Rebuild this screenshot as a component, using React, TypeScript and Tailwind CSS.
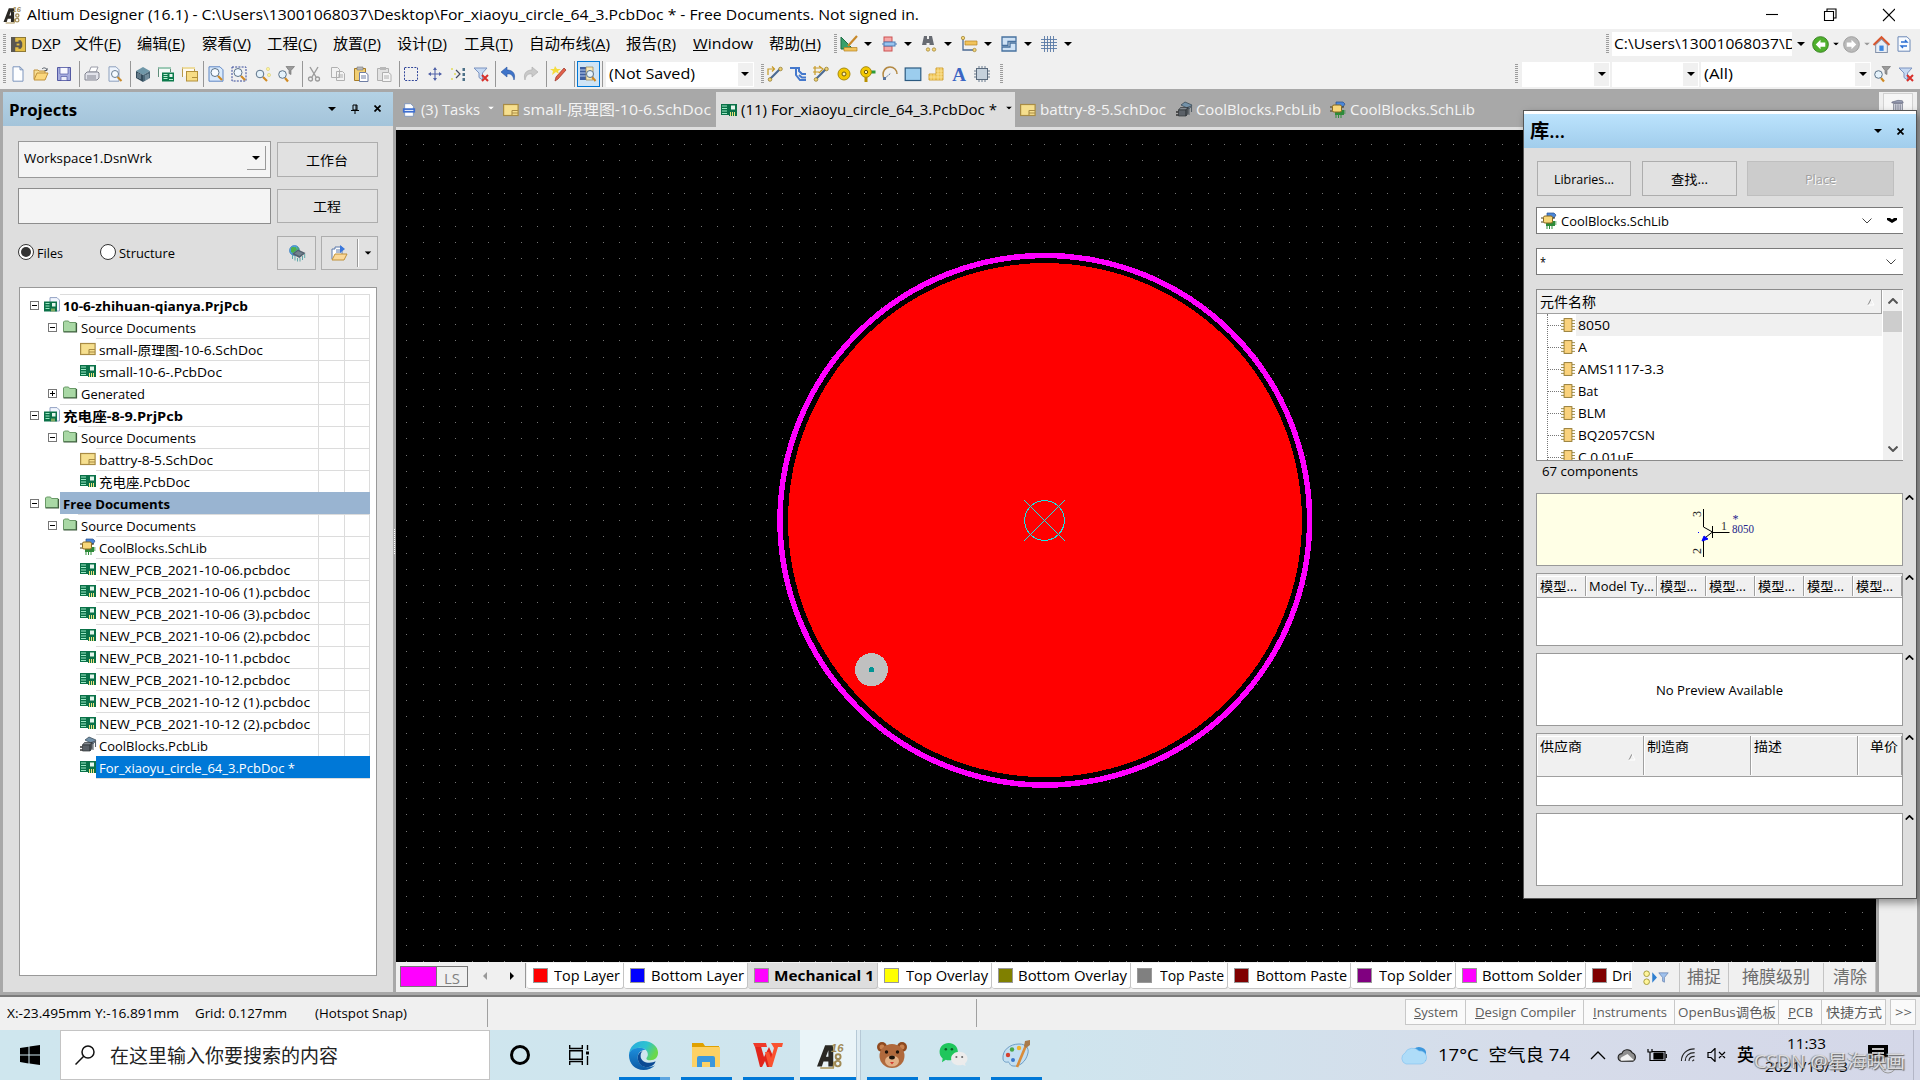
import { useLayoutEffect, useRef } from "react";
import type { ReactNode } from "react";

/* Text squeezed or stretched horizontally to the width given by its class. */
function Fit({ c, children }: { c: string; children: ReactNode }) {
  const outer = useRef<HTMLSpanElement>(null);
  const inner = useRef<HTMLSpanElement>(null);
  useLayoutEffect(() => {
    const o = outer.current;
    const i = inner.current;
    if (!o || !i) return;
    i.style.transform = "none";
    i.style.transform = `scaleX(${o.getBoundingClientRect().width / i.getBoundingClientRect().width})`;
  }, []);
  return (
    <span ref={outer} className={`block shrink-0 whitespace-pre leading-[20px] ${c}`}>
      <span ref={inner} className="inline-block origin-left">
        {children}
      </span>
    </span>
  );
}

const glyphs: Record<string, ReactNode> = {
  dxp: (
    <>
      <rect x=".5" y=".5" width="15" height="15" fill="#e3bd45" stroke="#8a7430" />
      <rect x="0" y="0" width="4.500" height="16" fill="#5a5752" />
      <path d="M4 5h4V3.500h2.500L12 6v4l-1.500 2.500H8V11H4z" fill="#5b5750" />
      <path d="M6 7h3v2H6z" fill="#e3bd45" />
    </>
  ),
  new: <path d="M3 .8h7l3 3v11.400H3z M10 .8v3h3" fill="#fdfeff" stroke="#7d95bd" />,
  open: (
    <>
      <path d="M1 13V4h4l1 1h6v3" fill="#f7dd93" stroke="#c0913a" />
      <path d="M1 14l3-7h11l-3 7z" fill="#fbd77c" stroke="#c0913a" />
      <path d="M9 3c2-2 4-1 5 1m0-2v2.500h-2.500" fill="none" stroke="#555d68" />
    </>
  ),
  save: (
    <>
      <path d="M1.500 1.500h13v13h-13z" fill="#a4abdd" stroke="#5359a3" />
      <path d="M4 1.500h8V8H4z" fill="#f8f9ff" stroke="#5359a3" strokeWidth=".7" />
      <path d="M5 10.500h6v4H5z" fill="#eceefa" stroke="#5359a3" strokeWidth=".7" />
    </>
  ),
  print: (
    <>
      <path d="M5 6l2-5h7l-2 5z" fill="#fff" stroke="#9a9ca8" />
      <path d="M1 8l2-2h11l1 1v5l-2 2H1z" fill="#e1e2ea" stroke="#81838f" />
      <path d="M3 10h9M3 12h9" stroke="#81838f" />
    </>
  ),
  preview: (
    <>
      <path d="M2 .8h7l3 3v11.400H2z" fill="#eef4fd" stroke="#8da0bd" />
      <path d="M10.500 11l4 4" stroke="#c98b2c" strokeWidth="2" />
      <circle cx="8" cy="8" r="3.500" fill="#f4faff" stroke="#687d92" />
    </>
  ),
  cube: (
    <>
      <path d="M8 1l7 4-7 4-7-4z" fill="#6f97a8" />
      <path d="M1 5l7 4v7l-7-4z" fill="#334c5c" />
      <path d="M15 5L8 9v7l7-4z" fill="#4b6878" />
      <path d="M3 7v5m2-4v5m6-4v5m2-6v5" stroke="#b9cfda" strokeWidth=".7" />
    </>
  ),
  pcbwin: (
    <>
      <path d="M.5 11V1.500h12V6" fill="#f4faf7" stroke="#5f8d7a" />
      <path d="M.5 1h12.500v2H.5z" fill="#9cc9b5" />
      <rect x="4" y="6.500" width="12" height="9" fill="#0c7a4c" />
      <path d="M5.500 8.500h4m-4 2h4m-4 2h4M11 13.500h4" stroke="#b9f0d2" />
      <rect x="11.500" y="8" width="3" height="3" fill="#e8f6ef" />
    </>
  ),
  schwin: (
    <>
      <path d="M.5 11V1.500h12V6" fill="#fffaf0" stroke="#b89a4b" />
      <path d="M.5 1h12.500v2H.5z" fill="#eddc9f" />
      <rect x="4.500" y="5.500" width="11" height="9.500" fill="#f7dc85" stroke="#b2903b" />
      <path d="M10 11.500h5" stroke="#b2903b" />
    </>
  ),
  zoomdoc: (
    <>
      <path d="M1 .8h11l3 3v11.400H1z" fill="#d9eafc" stroke="#5f86c4" />
      <path d="M10 10l4 4" stroke="#d08a22" strokeWidth="2.200" />
      <circle cx="7" cy="6.500" r="4" fill="#f6fbff" stroke="#5b7288" />
    </>
  ),
  zoomsel: (
    <>
      <rect x="1" y="1" width="14" height="14" fill="none" stroke="#32479a" strokeDasharray="2 1.200" />
      <path d="M10 10l4 4" stroke="#d08a22" strokeWidth="2.200" />
      <circle cx="7" cy="6.500" r="4" fill="#f0f8ff" stroke="#5b7288" />
    </>
  ),
  zoompts: (
    <>
      <path d="M8 11l4 4" stroke="#d08a22" strokeWidth="2.200" />
      <circle cx="5" cy="8" r="3.800" fill="#e5f2fb" stroke="#5b7288" />
      <circle cx="13" cy="3" r="1.600" fill="#fff59b" stroke="#d6cc7a" strokeWidth=".6" />
      <circle cx="14" cy="9" r="1.600" fill="#fff59b" stroke="#d6cc7a" strokeWidth=".6" />
    </>
  ),
  zoomfil: (
    <>
      <path d="M8 .5h8.500L13 4.500v4l-2-1v-3z" fill="#9a9a9a" stroke="#6a6a6a" strokeWidth=".6" />
      <path d="M7 12l3 3.500" stroke="#d08a22" strokeWidth="2.200" />
      <circle cx="4.500" cy="8.500" r="3.800" fill="#e5f2fb" stroke="#5b7288" />
    </>
  ),
  cut: (
    <>
      <path d="M4 1l6 10M12 1L6 11" stroke="#9b9b9b" strokeWidth="1.400" />
      <circle cx="4.500" cy="13" r="2" fill="none" stroke="#9b9b9b" strokeWidth="1.300" />
      <circle cx="11.500" cy="13" r="2" fill="none" stroke="#9b9b9b" strokeWidth="1.300" />
    </>
  ),
  copy: <path d="M1.500 1.500h6l2 2v8h-8zM6.500 5.500h6l2 2v7h-8zM8 9h5m-5 2h5" fill="#f2f2f2" stroke="#b0b0b0" />,
  paste: (
    <>
      <path d="M1.500 2.500h11v12h-11z" fill="#f1cf74" stroke="#a77c26" />
      <path d="M4 1h6v3H4z" fill="#b9b9b9" stroke="#777" strokeWidth=".6" />
      <path d="M6.500 6.500h6l2.500 2v7H6.500zM8 10h5m-5 2h5" fill="#fff" stroke="#6f7ea4" />
    </>
  ),
  pasteg: (
    <>
      <path d="M1.500 2.500h11v12h-11z" fill="#e2e2e2" stroke="#b0b0b0" />
      <path d="M4 1h6v3H4z" fill="#b9b9b9" />
      <path d="M6.500 6.500h6l2.500 2v7H6.500zM8 10h5m-5 2h5" fill="#f5f5f5" stroke="#b0b0b0" />
    </>
  ),
  select: <rect x="1.500" y="1.500" width="13" height="13" fill="none" stroke="#32479a" strokeDasharray="2 1.300" />,
  move: (
    <>
      <path d="M8 2v12M2 8h12" stroke="#5263a8" strokeWidth="1.100" />
      <path d="M8 1l2 3H6zM8 15l2-3H6zM1 8l3-2v4zM15 8l-3-2v4z" fill="#5263a8" />
    </>
  ),
  desel: (
    <>
      <path d="M6 4l4 4-4 4" fill="none" stroke="#434b5f" strokeWidth="1.200" />
      <path d="M1 2h2v2H1zM4 7h2v2H4zM1 12h2v2H1z" fill="#e5e07e" />
      <path d="M12.500 2h2.500v3h-2.500zM12.500 7h2.500v3h-2.500zM12.500 12h2.500v3h-2.500z" fill="#4c7087" />
    </>
  ),
  clrfil: (
    <>
      <path d="M1 2h13L9.500 7v7L6 11.500V7z" fill="#c6d9f3" stroke="#7c94c0" />
      <path d="M9 9l6 6m0-6l-6 6" stroke="#d8302c" strokeWidth="2" />
    </>
  ),
  undo: <path d="M7 1L1 6l6 5V8c4-.5 6 1 7 6 2-6-1-10-7-10z" fill="#3f74c9" stroke="#2a56a0" strokeWidth=".6" />,
  redo: <path d="M9 1l6 5-6 5V8c-4-.5-6 1-7 6C0 8 3 4 9 4z" fill="#c9c9c9" stroke="#aaa" strokeWidth=".6" />,
  cross: (
    <>
      <path d="M14 2l2 2-8 9-3 2 1-4z" fill="#e2604a" stroke="#9b2f22" strokeWidth=".7" />
      <path d="M0 3l4 0 1-3 2 3 4 0-3 2 1 3-3-2-4 3 1-4z" fill="#f5dc3e" />
    </>
  ),
  browse: (
    <>
      <rect x="0" y="1" width="6" height="13" fill="#3f5fa0" />
      <path d="M0 4h6M0 7h6M0 10h6" stroke="#bcd0f0" />
      <path d="M6 1h7v13H6z" fill="#f7e7b7" stroke="#99854a" strokeWidth=".7" />
      <path d="M12 11l3.500 4" stroke="#d08a22" strokeWidth="2" />
      <circle cx="10" cy="8" r="3.500" fill="#e5f2fb" stroke="#5b7288" />
    </>
  ),
  route: (
    <>
      <path d="M1 9V3h6m-2-2.500L7.500 3 5 5.500" fill="none" stroke="#c79a24" strokeWidth="1.200" />
      <path d="M3 13L13 3" stroke="#4b6a93" strokeWidth="2.200" />
      <circle cx="3" cy="13.500" r="1.800" fill="#ecd072" stroke="#8e7423" strokeWidth=".7" />
      <circle cx="13.500" cy="3" r="1.800" fill="#ecd072" stroke="#8e7423" strokeWidth=".7" />
    </>
  ),
  diff: <path d="M0 2h9v3l3 3h4M6 2v7l4 5h6M9 9l3 2.500h4" fill="none" stroke="#4478cc" strokeWidth="2" />,
  multi: (
    <>
      <path d="M0 2h8M0 6h6M2 0v9M6 0l4 3-4 4" fill="none" stroke="#c79a24" strokeWidth="1.200" />
      <path d="M3 13L13 3" stroke="#4b6a93" strokeWidth="2.200" />
      <circle cx="3" cy="13.500" r="1.800" fill="#ecd072" stroke="#8e7423" strokeWidth=".7" />
      <circle cx="13.500" cy="3" r="1.800" fill="#ecd072" stroke="#8e7423" strokeWidth=".7" />
    </>
  ),
  pad: (
    <>
      <circle cx="8" cy="8" r="6" fill="#f3c800" stroke="#a88b0d" />
      <circle cx="8" cy="8" r="2" fill="#fff3b0" stroke="#6f5b0c" />
    </>
  ),
  via: (
    <>
      <path d="M7 8v8" stroke="#b99000" strokeWidth="3" />
      <path d="M10 4.500h6.500v3H10z" fill="#2e9b36" />
      <circle cx="7" cy="6" r="5.300" fill="#f3c800" stroke="#a88b0d" />
      <circle cx="7" cy="6" r="1.700" fill="#fff3b0" stroke="#6f5b0c" />
    </>
  ),
  arc: (
    <>
      <path d="M2 13C-1 5 4 1 8 1c4 0 7 3 7 7" fill="none" stroke="#b38842" strokeWidth="1.500" />
      <path d="M2 13l7-6" stroke="#58739b" strokeDasharray="2 1" />
      <path d="M1 11h3v3H1z" fill="#58739b" />
    </>
  ),
  fill: <rect x=".2" y="2" width="15.600" height="12.500" fill="#9ccdee" stroke="#2c5a80" strokeWidth="1.200" />,
  poly: (
    <>
      <path d="M8 2h7v12H1V8h7z" fill="#f0c552" stroke="#d3a53c" />
      <path d="M10 2v12M13 2v12M3 8v6M6 8v6M8 5h7M1 11h14M8 8h7" stroke="#fbe7a8" strokeWidth=".7" />
    </>
  ),
  text: (
    <text x="8" y="14.500" textAnchor="middle" fontSize="19" fontWeight="bold" fill="#3b66c4" fontFamily="Liberation Serif, serif">
      A
    </text>
  ),
  comp: (
    <>
      <path d="M5 0v16M8 0v16M11 0v16M0 5h16M0 8h16M0 11h16" stroke="#66788c" />
      <rect x="2.500" y="2.500" width="11" height="11" fill="#c5d1dc" stroke="#5b6b7d" />
    </>
  ),
  draft: (
    <>
      <path d="M0 1v12h12z" fill="#37a06b" stroke="#1c6f45" />
      <path d="M3 11.500h13v3.500H3z" fill="#f1c35b" stroke="#b4821f" strokeWidth=".7" />
      <path d="M16 0L7 10" stroke="#c8892a" strokeWidth="2.200" />
    </>
  ),
  align: (
    <>
      <path d="M1 8h15" stroke="#4d7db5" />
      <rect x="3" y="1" width="8" height="5" fill="#f5a7a7" stroke="#cc5050" />
      <rect x="3" y="10" width="8" height="5" fill="#f5a7a7" stroke="#cc5050" />
      <rect x="3" y="6" width="11" height="4" fill="#9ac4ef" stroke="#4d7db5" />
    </>
  ),
  bino: (
    <>
      <path d="M3 0h3v3h2V0h3l2 9H8.500V7h-3v2H1z" fill="#676b72" />
      <circle cx="7" cy="13.500" r="1.700" fill="#f3d579" stroke="#9c7e2c" strokeWidth=".7" />
      <circle cx="13" cy="13.500" r="1.700" fill="#f3d579" stroke="#9c7e2c" strokeWidth=".7" />
    </>
  ),
  dims: (
    <>
      <path d="M2 2v12h11" fill="none" stroke="#4b6a93" strokeWidth="1.300" />
      <path d="M4 5h12v4H4z" fill="#f1c35b" stroke="#b4821f" strokeWidth=".7" />
      <circle cx="2" cy="2" r="1.700" fill="#f3d579" stroke="#9c7e2c" strokeWidth=".7" />
      <circle cx="13.500" cy="14" r="1.700" fill="#f3d579" stroke="#9c7e2c" strokeWidth=".7" />
    </>
  ),
  room: (
    <>
      <path d="M1 1h14v4.500H7v4H1z" fill="#cfe2f5" stroke="#47719f" strokeWidth="1.300" />
      <path d="M15 7v8H1v-4h8V7z" fill="#cfe2f5" stroke="#47719f" strokeWidth="1.300" />
    </>
  ),
  grid: <path d="M3.500 0v16M6.500 0v16M9.500 0v16M12.500 0v16M0 3.500h16M0 6.500h16M0 9.500h16M0 12.500h16" stroke="#5878a5" strokeWidth=".9" />,
  back: (
    <>
      <circle cx="8" cy="8" r="7.400" fill="#4fb02d" stroke="#2f7a1a" strokeWidth=".8" />
      <path d="M8 3.500L3.500 8 8 12.500V10h4.500V6H8z" fill="#fff" />
    </>
  ),
  fwd: (
    <>
      <circle cx="8" cy="8" r="7.400" fill="#b9b9b9" stroke="#979797" strokeWidth=".8" />
      <path d="M8 3.500L12.500 8 8 12.500V10H3.500V6H8z" fill="#fff" />
    </>
  ),
  home: (
    <>
      <path d="M2.500 8v7.500h11V8L8 3z" fill="#e9eef5" stroke="#8593ab" />
      <path d="M.5 8.500L8 1.200l7.500 7.300" fill="none" stroke="#d8572f" strokeWidth="1.900" />
      <path d="M6 9h4v5H6z" fill="#3b86e0" />
    </>
  ),
  refresh: (
    <>
      <path d="M2 .8h9l3 3v11.400H2z" fill="#f8fbff" stroke="#6b87b5" />
      <path d="M5 6h6l-2-2M11 10H5l2 2" fill="none" stroke="#2a6fd4" strokeWidth="1.400" />
    </>
  ),
  pcb: (
    <>
      <path d="M0 2h16v12H8v-1H0z" fill="#0a7148" />
      <path d="M1 4h5M1 6.500h5M1 9h5M1 11.500h5" stroke="#9be8c4" />
      <rect x="10" y="3.500" width="4" height="4" fill="#e3f5ec" />
      <path d="M9.500 10v4M11.500 10v4M13.500 10v4" stroke="#f0e27c" />
    </>
  ),
  sch: (
    <>
      <rect x=".6" y="2.500" width="14.500" height="11" fill="#f6df8e" stroke="#a98c45" strokeWidth="1.200" />
      <path d="M9 8.500h6M9 8.500v5M9 11h6" stroke="#a98c45" strokeWidth="1.100" />
    </>
  ),
  prj: (
    <>
      <path d="M6 .6h7l2.500 2.500V14H6z" fill="#f3f7ff" stroke="#93a3c4" />
      <path d="M0 4.500h13v10H0z" fill="#0a7148" />
      <path d="M1.500 6.500h4M1.500 9h4M1.500 11.500h4" stroke="#9be8c4" />
      <rect x="8" y="6" width="3.500" height="3.500" fill="#e3f5ec" />
      <path d="M8 11.500v3M10 11.500v3" stroke="#f0e27c" />
    </>
  ),
  folder: (
    <>
      <path d="M1.500 12.500V3l1-1h4l1 1.500h6.500v9z" fill="#a9d8a5" stroke="#6a9a68" />
      <path d="M1.500 13h13V4" fill="none" stroke="#3f5c3e" strokeWidth="1.200" />
    </>
  ),
  schlib: (
    <>
      <path d="M6 0h7l2 2-2 3H6z" fill="#4b86d8" stroke="#28508e" strokeWidth=".7" />
      <rect x="5" y="8" width="9" height="5" fill="#2e8b3a" />
      <path d="M6 13v3M8.500 13v3M11 13v3M13.500 11h2M13.500 9h2" stroke="#2e8b3a" />
      <path d="M0 5h3M0 9h3M11 5h3" stroke="#4b3d16" />
      <rect x="2.500" y="3" width="9" height="7" rx="1.500" fill="#f7d77a" stroke="#8a6a20" />
    </>
  ),
  pcblib: (
    <>
      <path d="M5 3l4-3 7 3-3 4z" fill="#7391a8" stroke="#30424f" strokeWidth=".7" />
      <path d="M9 6.500l6-2.500v2M15.500 4v6M13 6v7" fill="none" stroke="#555f68" strokeWidth="1.100" />
      <path d="M2.500 8l2-2.500H12L10 8z" fill="#858b92" stroke="#2f3338" strokeWidth=".7" />
      <path d="M2.500 8H10v6H2.500zM10 8l2-2.500v6L10 14z" fill="#5b6168" stroke="#2f3338" strokeWidth=".7" />
      <path d="M0 10h2.500M0 13h2.500" stroke="#333" strokeWidth="1.300" />
    </>
  ),
  tasks: (
    <>
      <path d="M3 .8h7l3 3v11.400H3z" fill="#fdfeff" stroke="#7d95bd" />
      <path d="M1 6h14v5H1z" fill="#3f6fd0" />
      <path d="M3 8.500h10" stroke="#fff" />
    </>
  ),
  chip: (
    <>
      <path d="M0 3h16M0 6.300h16M0 9.600h16M0 13h16" stroke="#93813a" />
      <rect x="3.500" y=".7" width="9" height="14.600" fill="#fad27c" stroke="#8c7228" />
    </>
  ),
  globe: (
    <>
      <circle cx="5.500" cy="5.500" r="5" fill="#4da3dd" stroke="#3a7cc0" strokeWidth=".7" />
      <path d="M2 3c2-2 3 0 5-1l1 3-4 3-2-1zM8 1l2 3-1 2z" fill="#4fb04a" />
      <path d="M3.500 10v4M6 11v4.500M8.500 13v3.500M11 13v3.500M13.500 11v4M15.700 9v4" stroke="#5fa9a9" />
      <path d="M9 4.500l7.500 3.500-6 5-7.500-4z" fill="#52606e" />
      <path d="M9 6l5 2.300-3.500 2.700-5-2.500z" fill="#72828f" />
    </>
  ),
  openprj: (
    <>
      <path d="M1 14V4h3v-2h7v8" fill="#fff" stroke="#5b79ab" />
      <path d="M5 5h5M5 7h5" stroke="#5b79ab" />
      <path d="M1 15l3-6h12l-3 6z" fill="#fbd99a" stroke="#c0913a" />
      <path d="M9 0l5 4-5 4z" fill="#3a77dc" />
    </>
  ),
  ad: (
    <>
      <path d="M0 15L5 2h5l0 13H7v-3H4l-1 3zM5.500 9H7V5z" fill="#2a2824" fillRule="evenodd" />
      <path d="M2 16h8l.5-4" stroke="#a99256" fill="none" />
      <text x="8.500" y="6" fontSize="7" fontWeight="bold" fontStyle="italic" fill="#a08a55" fontFamily="Liberation Sans, sans-serif">16</text>
      <circle cx="13" cy="9" r="1.500" fill="none" stroke="#a08a55" strokeWidth="1.200" />
      <circle cx="12.800" cy="13.300" r="1.700" fill="none" stroke="#a08a55" strokeWidth="1.200" />
    </>
  ),
  trash: (
    <>
      <path d="M3 5h10v11H3z" fill="#d9dbe2" stroke="#7b7f90" />
      <path d="M5.500 6v10M8 6v10M10.500 6v10" stroke="#6d7188" />
      <path d="M1 3.500l7-2 5 .5 1 2.500H1z" fill="#9aa0b5" stroke="#5e6378" strokeWidth=".7" />
    </>
  ),
};

function Icon({ n, c = "w-4 h-4" }: { n: string; c?: string }) {
  return (
    <svg viewBox="0 0 16 16" className={`shrink-0 overflow-visible ${c}`} fill="none">
      {glyphs[n]}
    </svg>
  );
}

function Tri({ c = "text-black" }: { c?: string }) {
  return (
    <svg viewBox="0 0 8 4" className={`h-[4px] w-[8px] shrink-0 ${c}`}>
      <path d="M0 0h8L4 4z" fill="currentColor" />
    </svg>
  );
}

const Grip = ({ c = "" }: { c?: string }) => (
  <div className={`h-[20px] w-[3px] shrink-0 bg-[repeating-linear-gradient(#9c9c9c_0_1px,transparent_1px_2px)] ${c}`} />
);
const Sep = ({ c = "" }: { c?: string }) => <div className={`h-[26px] w-px shrink-0 bg-[#979797] ${c}`} />;

function TitleBar() {
  return (
    <div className="flex h-[29px] items-center bg-white text-[14.5px] text-black">
      <Icon n="ad" c="ml-[3px] h-[17px] w-[18px]" />
      <Fit c="ml-[6px] w-[892px]">
        {"Altium Designer (16.1) - C:\\Users\\13001068037\\Desktop\\For_xiaoyu_circle_64_3.PcbDoc * - Free Documents. Not signed in."}
      </Fit>
      <svg viewBox="0 0 130 14" className="mr-[25px] ml-auto h-[14px] w-[130px]" fill="none" stroke="#000" strokeWidth="1.100">
        <path d="M1 6.500h12" />
        <path d="M59.500 3.500h9v9h-9zM62 3V1h9v9h-2" />
        <path d="M118 1l12 12M130 1l-12 12" />
      </svg>
    </div>
  );
}

const menus: [string, string, string, string][] = [
  ["文件(", "F", ")", "w-[48px]"],
  ["编辑(", "E", ")", "w-[48px]"],
  ["察看(", "V", ")", "w-[49px]"],
  ["工程(", "C", ")", "w-[50px]"],
  ["放置(", "P", ")", "w-[48px]"],
  ["设计(", "D", ")", "w-[50px]"],
  ["工具(", "T", ")", "w-[49px]"],
  ["自动布线(", "A", ")", "w-[81px]"],
  ["报告(", "R", ")", "w-[50px]"],
  ["", "W", "indow", "w-[60px]"],
  ["帮助(", "H", ")", "w-[52px]"],
];

function MenuRow() {
  return (
    <div className="flex h-[30px] items-center bg-[#f0f0f0] text-[14.5px]">
      <Grip c="ml-[3px]" />
      <Icon n="dxp" c="ml-[5px] h-[15px] w-[15px]" />
      <Fit c="ml-[5px] w-[30px]">
        D<u>X</u>P
      </Fit>
      <div className="ml-[12px] flex gap-[16.3px]">
        {menus.map(([a, u, b, w]) => (
          <Fit key={a + u} c={w}>
            {a}
            <u>{u}</u>
            {b}
          </Fit>
        ))}
      </div>
      <Grip c="ml-[13px]" />
      <div className="ml-[4px] flex">
        {["draft", "align", "bino", "dims", "room", "grid"].map((n) => (
          <div key={n} className="flex w-[40px] items-center gap-[7px]">
            <Icon n={n} />
            <Tri />
          </div>
        ))}
      </div>
      <Grip c="ml-auto" />
      <div className="ml-[3px] flex h-[24px] w-[197px] shrink-0 items-center bg-white">
        <div className="ml-[2px] w-[178px] shrink-0 overflow-hidden">
          <Fit c="w-[182px]">{"C:\\Users\\13001068037\\D"}</Fit>
        </div>
        <div className="flex h-full flex-1 items-center justify-center bg-[#f0f0f0]">
          <Tri />
        </div>
      </div>
      <Icon n="back" c="ml-[3px] h-[17px] w-[17px]" />
      <Tri c="ml-[3px] scale-75" />
      <Icon n="fwd" c="ml-[3px] h-[17px] w-[17px]" />
      <Tri c="ml-[3px] scale-75 text-[#999]" />
      <Icon n="home" c="ml-[2px] h-[17px] w-[17px]" />
      <Icon n="refresh" c="mr-[8px] ml-[6px] h-[16px] w-[16px]" />
    </div>
  );
}

function Tools({ names, cell = "w-[23.3px]" }: { names: string[]; cell?: string }) {
  return (
    <div className="flex shrink-0">
      {names.map((n) => (
        <div key={n} className={`flex justify-center ${cell}`}>
          <Icon n={n} />
        </div>
      ))}
    </div>
  );
}

function Combo({ c, children }: { c: string; children?: ReactNode }) {
  return (
    <div className={`flex h-[25px] shrink-0 items-center bg-white ${c}`}>
      {children}
      <div className="mr-px ml-auto flex h-[23px] w-[15px] items-center justify-center bg-[#f0f0f0]">
        <Tri />
      </div>
    </div>
  );
}

function ToolRow() {
  return (
    <div className="flex h-[30px] items-center bg-[#f0f0f0] text-[14.5px]">
      <Grip c="ml-[3px]" />
      <Tools names={["new", "open", "save"]} />
      <Sep c="ml-[3px]" />
      <Tools names={["print", "preview"]} />
      <Sep c="ml-[4px]" />
      <Tools names={["cube", "pcbwin", "schwin"]} />
      <Sep c="ml-[2px]" />
      <Tools names={["zoomdoc", "zoomsel", "zoompts", "zoomfil"]} />
      <Sep c="ml-[4px]" />
      <Tools names={["cut", "copy", "paste", "pasteg"]} />
      <Sep c="ml-[3px]" />
      <Tools names={["select", "move", "desel", "clrfil"]} />
      <Sep c="ml-[2px]" />
      <Tools names={["undo", "redo"]} />
      <Sep c="ml-[3px]" />
      <Tools names={["cross"]} />
      <Sep c="ml-[4px]" />
      <div className="ml-[2px] flex h-[26px] w-[23px] shrink-0 items-center justify-center border border-[#0078d7] bg-[#cfe4f5]">
        <Icon n="browse" />
      </div>
      <Sep c="ml-[2px]" />
      <Combo c="ml-[3px] w-[148px]">
        <Fit c="ml-[3px] w-[86px]">(Not Saved)</Fit>
      </Combo>
      <Grip c="ml-[7px]" />
      <Tools cell="w-[23px]" names={["route", "diff", "multi", "pad", "via", "arc", "fill", "poly", "text", "comp"]} />
      <Grip c="ml-[6px]" />
      <Grip c="ml-auto" />
      <Combo c="ml-[4px] w-[88px]" />
      <Combo c="ml-[2px] w-[87px]" />
      <Combo c="ml-[2px] w-[170px]">
        <Fit c="ml-[3px] w-[29px]">(All)</Fit>
      </Combo>
      <Icon n="zoomfil" c="ml-[3px] h-4 w-4" />
      <Icon n="clrfil" c="mr-[6px] ml-[8px] h-4 w-4" />
    </div>
  );
}

type Row = { l: number; t: string; w: string; i: string; b?: "-" | "+"; bold?: boolean; s?: string };
const tree: Row[] = [
  { l: 0, t: "10-6-zhihuan-qianya.PrjPcb", w: "w-[185px]", i: "prj", b: "-", bold: true },
  { l: 1, t: "Source Documents", w: "w-[115px]", i: "folder", b: "-" },
  { l: 2, t: "small-原理图-10-6.SchDoc", w: "w-[164px]", i: "sch" },
  { l: 2, t: "small-10-6-.PcbDoc", w: "w-[123px]", i: "pcb" },
  { l: 1, t: "Generated", w: "w-[64px]", i: "folder", b: "+" },
  { l: 0, t: "充电座-8-9.PrjPcb", w: "w-[120px]", i: "prj", b: "-", bold: true },
  { l: 1, t: "Source Documents", w: "w-[115px]", i: "folder", b: "-" },
  { l: 2, t: "battry-8-5.SchDoc", w: "w-[114px]", i: "sch" },
  { l: 2, t: "充电座.PcbDoc", w: "w-[91px]", i: "pcb" },
  { l: 0, t: "Free Documents", w: "w-[107px]", i: "folder", b: "-", bold: true, s: "bg-[#99b4d1] border-[#99b4d1]" },
  { l: 1, t: "Source Documents", w: "w-[115px]", i: "folder", b: "-" },
  { l: 2, t: "CoolBlocks.SchLib", w: "w-[108px]", i: "schlib" },
  { l: 2, t: "NEW_PCB_2021-10-06.pcbdoc", w: "w-[191px]", i: "pcb" },
  { l: 2, t: "NEW_PCB_2021-10-06 (1).pcbdoc", w: "w-[211px]", i: "pcb" },
  { l: 2, t: "NEW_PCB_2021-10-06 (3).pcbdoc", w: "w-[211px]", i: "pcb" },
  { l: 2, t: "NEW_PCB_2021-10-06 (2).pcbdoc", w: "w-[211px]", i: "pcb" },
  { l: 2, t: "NEW_PCB_2021-10-11.pcbdoc", w: "w-[191px]", i: "pcb" },
  { l: 2, t: "NEW_PCB_2021-10-12.pcbdoc", w: "w-[191px]", i: "pcb" },
  { l: 2, t: "NEW_PCB_2021-10-12 (1).pcbdoc", w: "w-[211px]", i: "pcb" },
  { l: 2, t: "NEW_PCB_2021-10-12 (2).pcbdoc", w: "w-[211px]", i: "pcb" },
  { l: 2, t: "CoolBlocks.PcbLib", w: "w-[109px]", i: "pcblib" },
  { l: 2, t: "For_xiaoyu_circle_64_3.PcbDoc *", w: "w-[196px]", i: "pcb", s: "bg-[#0078d7] border-[#0078d7] text-white" },
];
const indent = ["pl-[10px]", "pl-[28px]", "pl-[46px]"];

function TreeRow({ r }: { r: Row }) {
  return (
    <div className={`flex h-[22px] items-center ${indent[r.l]}`}>
      <div className="flex w-[15px] shrink-0">
        {r.b && (
          <svg viewBox="0 0 9 9" className="h-[9px] w-[9px]" fill="none" shapeRendering="crispEdges">
            <rect x=".5" y=".5" width="8" height="8" stroke="#777" />
            <path d={r.b === "-" ? "M2 4.500h5" : "M2 4.500h5M4.500 2v5"} stroke="#000" />
          </svg>
        )}
      </div>
      <Icon n={r.i} c="-ml-[1px] h-[16px] w-[16px]" />
      <div className={`flex h-[22px] flex-1 items-center border-t pl-[3px] ${r.s ?? "border-[#dcdcdc]"}`}>
        <Fit c={`${r.w} ${r.bold ? "font-bold" : ""}`}>{r.t}</Fit>
        {!r.s && (
          <div className="ml-auto flex h-full">
            <div className="w-[26px] border-l border-[#dcdcdc]" />
            <div className="w-[26px] border-x border-[#dcdcdc]" />
          </div>
        )}
      </div>
    </div>
  );
}

const btn = "flex items-center justify-center border border-[#adadad] bg-[#e1e1e1]";

function Projects() {
  return (
    <div className="mt-[3px] ml-[3px] flex h-[900px] w-[390px] shrink-0 flex-col bg-[#dedede] text-[13px] text-black">
      <div className="flex h-[34px] shrink-0 items-center bg-gradient-to-b from-[#b4d2e5] to-[#a4c4da] pt-px text-[16px] font-bold">
        <Fit c="ml-[6px] w-[68px]">Projects</Fit>
        <div className="mr-[12px] mb-[2px] ml-auto flex items-center gap-[15px]">
          <Tri />
          <svg viewBox="0 0 8 10" className="h-[10px] w-[8px]" fill="none" stroke="#000">
            <path d="M2 1h4v5H2zM5 1v5M0 6.500h8M4 6.500V10" />
          </svg>
          <svg viewBox="0 0 7 7" className="h-[7px] w-[7px]" stroke="#000" strokeWidth="1.700">
            <path d="M.5.5l6 6M6.500.5l-6 6" />
          </svg>
        </div>
      </div>
      <div className="mt-[15px] ml-[15px] flex items-center gap-[6px]">
        <div className="flex h-[37px] w-[253px] items-center border border-[#999] bg-[#f4f4f4] pb-[3px] pl-[5px]">
          <Fit c="w-[128px]">Workspace1.DsnWrk</Fit>
          <div className="mr-[4px] ml-auto flex h-[24px] w-[19px] items-center justify-center border-r border-b border-[#999]">
            <Tri />
          </div>
        </div>
        <div className={`${btn} h-[35px] w-[101px]`}>
          <Fit c="mr-[1px] w-[42px]">工作台</Fit>
        </div>
      </div>
      <div className="mt-[10px] ml-[15px] flex items-center gap-[6px]">
        <div className="h-[36px] w-[253px] border border-[#8d8d8d] bg-[#f4f4f4]" />
        <div className={`${btn} h-[34px] w-[101px]`}>
          <Fit c="mr-[1px] mb-[1px] w-[28px]">工程</Fit>
        </div>
      </div>
      <div className="mt-[12px] ml-[15px] flex h-[34px] items-center">
        <div className="mb-[2px] flex h-[16px] w-[16px] items-center justify-center rounded-full border border-[#333] bg-white">
          <div className="h-[10px] w-[10px] rounded-full bg-[#333]" />
        </div>
        <Fit c="ml-[3px] w-[26px]">Files</Fit>
        <div className="mb-[2px] ml-[37px] h-[16px] w-[16px] rounded-full border border-[#333] bg-white" />
        <Fit c="ml-[3px] w-[56px]">Structure</Fit>
        <div className={`${btn} ml-[102px] h-[34px] w-[39px]`}>
          <Icon n="globe" />
        </div>
        <div className={`${btn} ml-[5px] h-[34px] w-[57px]`}>
          <Icon n="openprj" c="ml-[9px] h-4 w-4" />
          <div className="ml-[10px] h-[28px] w-[2px] border-r border-white bg-[#999]" />
          <div className="flex flex-1 justify-center">
            <Tri c="scale-[.85]" />
          </div>
        </div>
      </div>
      <div className="mt-[17px] ml-[16px] h-[689px] w-[358px] border border-[#999] bg-white pt-[6px] pr-[6px]">
        {tree.map((r, k) => (
          <TreeRow key={k} r={r} />
        ))}
        <div className="ml-[76px] h-px bg-[#dcdcdc]" />
      </div>
    </div>
  );
}

const step = 16.35;
function gridPath() {
  let d = "";
  for (let i = -39; i <= 50; i++)
    for (let j = -23; j <= 27; j++) d += `M${Math.round(648 + i * step)} ${Math.round(390 + j * step)}.5h1`;
  return d;
}

function Board() {
  return (
    <svg viewBox="0 0 1480 832" className="h-[832px] w-[1480px] bg-black" shapeRendering="crispEdges" fill="none">
      <path d={gridPath()} stroke="#757575" />
      <circle cx="648.800" cy="390.300" r="264.800" stroke="#f0f" strokeWidth="5.500" fill="#000" />
      <circle cx="649" cy="390.100" r="257" fill="#f00" />
      <g stroke="#00ffff" strokeWidth="1" opacity=".9">
        <circle cx="648.500" cy="390.500" r="19.800" />
        <path d="M628 370l41 41M669 370l-41 41" />
      </g>
      <circle cx="475.500" cy="539.700" r="16.500" fill="#c0c0c0" />
      <circle cx="475.500" cy="539.700" r="2.600" fill="#009494" />
    </svg>
  );
}

function Tabs() {
  return (
    <div className="flex h-[38px] items-end text-[14.5px] text-[#f4f4f4]">
      <div className="flex h-[35px] items-center pt-px">
        <Icon n="tasks" c="ml-[6px] h-[14px] w-[14px]" />
        <Fit c="ml-[5px] w-[59px]">(3) Tasks</Fit>
        <Tri c="mb-1 ml-[7px] scale-75 text-white" />
        <Icon n="sch" c="ml-[8px] h-[16px] w-[16px]" />
        <Fit c="ml-[4px] w-[188px]">small-原理图-10-6.SchDoc</Fit>
      </div>
      <div className="ml-[5px] flex h-[35px] w-[299px] items-center bg-[#dedede] pt-px text-black">
        <Icon n="pcb" c="ml-[5px] h-[16px] w-[16px]" />
        <Fit c="ml-[4px] w-[256px]">(11) For_xiaoyu_circle_64_3.PcbDoc *</Fit>
        <Tri c="mb-1 ml-[8px] scale-75" />
      </div>
      <div className="flex h-[35px] items-center pt-px">
        <Icon n="sch" c="ml-[5px] h-[16px] w-[16px]" />
        <Fit c="ml-[4px] w-[126px]">battry-8-5.SchDoc</Fit>
        <Icon n="pcblib" c="ml-[10px] h-[16px] w-[16px]" />
        <Fit c="ml-[4px] w-[125px]">CoolBlocks.PcbLib</Fit>
        <Icon n="schlib" c="ml-[9px] h-[16px] w-[16px]" />
        <Fit c="ml-[4px] w-[125px]">CoolBlocks.SchLib</Fit>
      </div>
    </div>
  );
}

const layers: [string, string, string, string][] = [
  ["Top Layer", "bg-[#ff0000]", "w-[97px]", "w-[66px]"],
  ["Bottom Layer", "bg-[#0000ff]", "w-[124px]", "w-[93px]"],
  ["Mechanical 1", "bg-[#ff00ff]", "w-[130px]", "w-[100px]"],
  ["Top Overlay", "bg-[#ffff00]", "w-[114px]", "w-[82px]"],
  ["Bottom Overlay", "bg-[#808000]", "w-[139px]", "w-[109px]"],
  ["Top Paste", "bg-[#808080]", "w-[97px]", "w-[64px]"],
  ["Bottom Paste", "bg-[#800000]", "w-[123px]", "w-[91px]"],
  ["Top Solder", "bg-[#800080]", "w-[105px]", "w-[73px]"],
  ["Bottom Solder", "bg-[#ff00ff]", "w-[130px]", "w-[100px]"],
];

function LayerBar() {
  return (
    <div className="flex h-[30px] items-start bg-[#f0f0f0] pt-px text-[14px] text-black">
      <div className="mt-[3px] ml-[4px] flex h-[21px] w-[68px] border border-[#777]">
        <div className="w-[36px] border-r border-[#777] bg-[#ff00ff]" />
        <Fit c="mt-[2px] ml-[7px] w-[16px] text-[#808080]">LS</Fit>
      </div>
      <svg viewBox="0 0 32 8" className="mt-[9px] ml-[15px] h-[8px] w-[32px]">
        <path d="M4 0v8L0 4z" fill="#999" />
        <path d="M27 0v8l4-4z" fill="#000" />
      </svg>
      <div className="ml-[10px] h-[25px] w-px bg-[#999]" />
      <div className="ml-[1px] flex">
        {layers.map(([n, col, w, tw]) => (
          <div
            key={n}
            className={`flex h-[26px] shrink-0 items-center justify-between rounded-b-[3px] border-r border-b border-[#c4c4c4] pt-px pr-[3px] pl-[6px] ${w} ${
              n === "Mechanical 1" ? "bg-[#dedede] font-bold" : "bg-white"
            }`}
          >
            <div className={`mb-[1px] h-[15px] w-[15px] border border-[#999] ${col}`} />
            <Fit c={tw}>{n}</Fit>
          </div>
        ))}
        <div className="flex h-[26px] w-[46px] items-center overflow-hidden border-b border-[#c4c4c4] bg-white pt-px pl-[6px]">
          <div className="mb-[1px] h-[15px] w-[15px] shrink-0 border border-[#999] bg-[#800000]" />
          <Fit c="ml-[5px] w-[20px]">Dri</Fit>
        </div>
      </div>
      <div className="flex h-[29px] text-[17px] text-[#6d6d6d]">
        <div className="flex w-[48px] items-center border-r border-[#c4c4c4] pl-[10px]">
          <svg viewBox="0 0 28 16" className="h-[15px] w-[28px]">
            <circle cx="4" cy="4" r="3" fill="#fff59b" stroke="#a39a3a" />
            <circle cx="4" cy="12.500" r="3" fill="#fff59b" stroke="#a39a3a" />
            <path d="M10 2.500v11L15 8z" fill="#2f7fd0" />
            <path d="M17 3h10l-4 5v5l-2-1V8z" fill="#9fc1ec" stroke="#5b79ab" strokeWidth=".7" />
          </svg>
        </div>
        <div className="flex w-[49px] items-center border-r border-[#c4c4c4] pb-px pl-[7px]">
          <Fit c="w-[34px]">捕捉</Fit>
        </div>
        <div className="flex w-[95px] items-center border-r border-[#c4c4c4] pb-px pl-[13px]">
          <Fit c="w-[68px]">掩膜级别</Fit>
        </div>
        <div className="flex w-[52px] items-center border-r border-[#c4c4c4] pb-px pl-[9px]">
          <Fit c="w-[34px]">清除</Fit>
        </div>
      </div>
    </div>
  );
}

function StatusBar() {
  const cells: [string, string, string, string][] = [
    ["S", "ystem", "w-[60px]", "w-[44px]"],
    ["D", "esign Compiler", "w-[118px]", "w-[101px]"],
    ["I", "nstruments", "w-[91px]", "w-[74px]"],
    ["", "OpenBus调色板", "w-[104px]", "w-[98px]"],
    ["P", "CB", "w-[43px]", "w-[25px]"],
    ["", "快捷方式", "w-[63px]", "w-[56px]"],
  ];
  return (
    <div className="flex h-[35px] items-start border-t-2 border-[#7b7b7b] bg-[#f0f0f0] text-[13px] text-black">
      <div className="flex h-[32px] items-center">
        <Fit c="ml-[7px] w-[172px]">X:-23.495mm Y:-16.891mm</Fit>
        <Fit c="ml-[16px] w-[92px]">Grid: 0.127mm</Fit>
        <Fit c="ml-[28px] w-[92px]">(Hotspot Snap)</Fit>
        <div className="ml-[80px] h-[28px] w-px bg-[#a0a0a0]" />
        <div className="ml-[488px] h-[28px] w-px bg-[#a0a0a0]" />
      </div>
      <div className="mt-[2px] ml-auto flex h-[26px] border border-[#c8c8c8] bg-[#fafafa] text-[#5c5c5c]">
        {cells.map(([u, t, w, tw], k) => (
          <div key={t} className={`flex items-center justify-center pl-px ${w} ${k < 5 ? "border-r border-[#c8c8c8]" : ""}`}>
            <Fit c={tw}>
              <u>{u}</u>
              {t}
            </Fit>
          </div>
        ))}
      </div>
      <div className="mt-[2px] mr-[4px] ml-[4px] flex h-[26px] w-[26px] items-center justify-center border border-[#c8c8c8] bg-[#fafafa] text-[#5c5c5c]">
        <Fit c="w-[17px]">{">>"}</Fit>
      </div>
    </div>
  );
}

const edge = (
  <svg viewBox="0 0 32 32" className="h-[31px] w-[31px]">
    <defs>
      <linearGradient id="eg1" x1="0" y1="0" x2="1" y2=".4">
        <stop offset="0" stopColor="#2aa7e0" />
        <stop offset=".6" stopColor="#2cc3d0" />
        <stop offset="1" stopColor="#6ad84c" />
      </linearGradient>
      <linearGradient id="eg2" x1="0" y1="0" x2="0" y2="1">
        <stop offset="0" stopColor="#1d8fdc" />
        <stop offset="1" stopColor="#0c59a4" />
      </linearGradient>
    </defs>
    <path d="M1 16C1 7 8 1 16 1c9 0 15 6 15 12 0 5-3 8-8 8-3 0-4-1-4-2 0-1 1.500-1.500 1.500-4C20.500 11 17 8 12 8 6 8 1 12 1 16z" fill="url(#eg1)" />
    <path d="M1 16c0-5 5-8 11-8 3 0 5 1 6 2-5 0-8 4-8 8 0 6 5 10 10 10 4 0 6-1 8-2-3 3-7 5-12 5C7 31 1 24 1 16z" fill="url(#eg2)" />
    <path d="M10 18c0-3 2-6 5-6.500-1.500 1-2 3-2 5 0 5 5 7 9 7 3 0 5-1 6.500-1.500-1 4-5 6-9 6-5 0-9.500-4-9.500-10z" fill="#0b4a94" />
  </svg>
);
const explorer = (
  <svg viewBox="0 0 28 24" className="h-[24px] w-[28px]">
    <path d="M0 0h11l2 3h14v6H0z" fill="#e0a100" />
    <path d="M0 4h28v20H0z" fill="#fdd164" />
    <path d="M5 24V15q0-2 2-2h14q2 0 2 2v9h-5v-5h-8v5z" fill="#3c98dc" />
  </svg>
);
const wps = (
  <svg viewBox="0 0 30 24" className="h-[24px] w-[30px]">
    <path d="M1 0h6l4 14 5-10 4 9-4 11h-2l-2-6-3 6H7z" fill="#e1251b" />
    <path d="M0 0h13l1 4H2z" fill="#ef3a2a" />
    <path d="M18 0h12l-1 4h-4l-6 20h-3L12 9h4l2 6 3-10z" fill="#fa5230" />
  </svg>
);
const bear = (
  <svg viewBox="0 0 30 26" className="h-[26px] w-[30px]">
    <circle cx="5" cy="5" r="5" fill="#8f4a1f" />
    <circle cx="25" cy="5" r="5" fill="#8f4a1f" />
    <circle cx="5" cy="5" r="2.500" fill="#c98250" />
    <circle cx="25" cy="5" r="2.500" fill="#c98250" />
    <ellipse cx="15" cy="14" rx="12.500" ry="12" fill="#b0693c" />
    <ellipse cx="15" cy="19" rx="7" ry="5.500" fill="#e2b187" />
    <circle cx="9.500" cy="10" r="1.700" fill="#1d1209" />
    <circle cx="20.500" cy="10" r="1.700" fill="#1d1209" />
    <ellipse cx="15" cy="15.500" rx="2.900" ry="1.900" fill="#1d1209" />
    <path d="M13 20h4l-2 2.500z" fill="#d4392e" />
  </svg>
);
const wechat = (
  <svg viewBox="0 0 30 26" className="h-[25px] w-[30px]">
    <path d="M0 9c0-5 4-9 9.500-9S19 4 19 9s-4 9-9.500 9c-1 0-2 0-3-.5L2.500 20l.7-4C1 14 0 12 0 9z" fill="#1fc65c" />
    <circle cx="6.500" cy="6.500" r="1.300" fill="#0a5c28" />
    <circle cx="12.800" cy="6.500" r="1.300" fill="#0a5c28" />
    <path d="M12 16c0-4 4-7 8.500-7s8.500 3 8.500 7c0 2-1 4-2.500 5l.5 3-3-1.500c-6 2-12-1-12-6.500z" fill="#ececec" />
    <circle cx="17.500" cy="14.500" r="1.100" fill="#666" />
    <circle cx="23.500" cy="14.500" r="1.100" fill="#666" />
  </svg>
);
const paint = (
  <svg viewBox="0 0 30 28" className="h-[28px] w-[30px]">
    <path d="M1 19C0 10 8 4 17 4c7 0 10 4 9 9-2 9-9 14-15 13-4-.5-3-4-5-4-2 .5-4.500 0-5-3z" fill="#c3dff2" stroke="#6d9dc4" />
    <circle cx="6" cy="15" r="2.200" fill="#d6402f" />
    <circle cx="10" cy="9.500" r="2.200" fill="#4aa84a" />
    <circle cx="17" cy="8" r="2.200" fill="#f1b32c" />
    <circle cx="11" cy="20" r="2" fill="#3b77c9" />
    <path d="M25 3L15 27" stroke="#d98c3a" strokeWidth="2.600" />
    <path d="M22 6l1-5 5-1 0 5-4 3z" fill="#a87a4a" />
  </svg>
);

function Taskbar() {
  const apps: [string, ReactNode][] = [
    ["explorer", explorer],
    ["wps", wps],
  ];
  const rest: [string, ReactNode][] = [
    ["bear", bear],
    ["wechat", wechat],
    ["paint", paint],
  ];
  return (
    <div className="relative flex h-[50px] items-stretch bg-[linear-gradient(90deg,#cfe6ee_0%,#cfe5ee_55%,#d6dcea_80%,#d4d7e8_100%)] text-black">
      <div className="flex w-[60px] items-center justify-center">
        <svg viewBox="0 0 20 20" className="h-[20px] w-[20px]">
          <path d="M0 3l8.500-1.300V9.500H0zM9.500 1.500L20 0v9.500H9.500zM0 10.500h8.500v8L0 17zM9.500 10.500H20V20L9.500 18.600z" />
        </svg>
      </div>
      <div className="flex w-[430px] items-center border border-[#c4c4c4] bg-white pl-[14px]">
        <svg viewBox="0 0 20 20" className="h-[20px] w-[20px]" fill="none" stroke="#111" strokeWidth="1.500">
          <circle cx="13" cy="7" r="6" />
          <path d="M8.700 11.300L.5 19.500" />
        </svg>
        <Fit c="mt-px ml-[15px] w-[228px] text-[19px] text-[#222]">在这里输入你要搜索的内容</Fit>
      </div>
      <div className="flex w-[60px] items-center justify-center">
        <div className="h-[20px] w-[20px] rounded-full border-[3px] border-black" />
      </div>
      <div className="flex w-[58px] items-center justify-center">
        <svg viewBox="0 0 20 20" className="h-[20px] w-[20px]" fill="none" stroke="#000" strokeWidth="1.400">
          <path d="M.7 0v3.500h12.600V0M.7 5.700h12.600v8.600H.7zM.7 20v-3.500h12.600V20M18.500 0v5M18.500 11v9" />
          <path d="M17 6.500h3v3h-3z" fill="#000" stroke="none" />
        </svg>
      </div>
      <div className="ml-[5px] flex w-[62px] flex-col items-center justify-end">
        <div className="mr-[2px] mb-[6px]">{edge}</div>
        <div className="flex h-[3px]">
          <div className="w-[41px] bg-[#0078d7]" />
          <div className="w-[10px] bg-[#5ea6e0]" />
        </div>
      </div>
      {apps.map(([k, i]) => (
        <div key={k} className="flex w-[62px] flex-col items-center justify-end">
          <div className="mb-[10px]">{i}</div>
          <div className="h-[3px] w-[51px] bg-[#0078d7]" />
        </div>
      ))}
      <div className="ml-[1px] flex w-[61px] border-r border-[#b6c9d6] bg-[#dfecf3]">
        <div className="flex w-[57px] flex-col items-center justify-end border-r border-[#b6c9d6] bg-[#eaf4f8]">
          <Icon n="ad" c="mb-[9px] ml-[3px] h-[26px] w-[30px]" />
          <div className="h-[3px] w-full bg-[#0078d7]" />
        </div>
      </div>
      {rest.map(([k, i]) => (
        <div key={k} className="flex w-[62.300px] flex-col items-center justify-end">
          <div className="mb-[9px]">{i}</div>
          <div className="h-[3px] w-[51px] bg-[#0078d7]" />
        </div>
      ))}
      <div className="mr-[6px] ml-auto flex items-center">
        <svg viewBox="0 0 28 20" className="h-[20px] w-[28px]">
          <path d="M14 4a7 6 0 0 1 12 5v7H14z" fill="#3c97dd" />
          <path d="M6 19a6 6 0 0 1-1-11 8 7 0 0 1 14-2 6.500 6.500 0 0 1 2 13z" fill="#aedcf8" stroke="#7fc0ee" strokeWidth=".6" />
        </svg>
        <Fit c="ml-[10px] w-[132px] text-[17px]">17°C  空气良 74</Fit>
        <svg viewBox="0 0 16 10" className="ml-[20px] h-[10px] w-[16px]" fill="none" stroke="#000" strokeWidth="1.300">
          <path d="M1 9l7-7 7 7" />
        </svg>
        <svg viewBox="0 0 22 16" className="ml-[11px] h-[15px] w-[21px]">
          <path d="M5 14a4 4 0 0 1 0-8 6 6 0 0 1 11-1 5 5 0 0 1 1 9z" fill="#8f8f8f" stroke="#222" strokeWidth="1.200" />
          <path d="M5 13.500c-2 0-2-3 0-4l6-3 7 6.500z" fill="#f4f4f4" />
        </svg>
        <svg viewBox="0 0 20 14" className="ml-[9px] h-[14px] w-[20px]" fill="none" stroke="#000" strokeWidth="1.200">
          <path d="M5 3.500h13v9H3V8M1 1v3h4V1M3 4v4" />
          <path d="M7 5h9v6H7z" fill="#000" />
          <path d="M19.300 6v4" />
        </svg>
        <svg viewBox="0 0 17 17" className="ml-[13px] h-[16px] w-[17px]" fill="none" stroke="#222" strokeWidth="1.200">
          <path d="M1 15C1 7 7 2 15 2M5 15C5 9.500 9 6 15 6M9 15c0-3 2.500-5 6-5M12.500 15l2-1.500" />
        </svg>
        <svg viewBox="0 0 19 14" className="ml-[10px] h-[14px] w-[19px]" fill="none" stroke="#000" strokeWidth="1.200">
          <path d="M1 4.500h3l4-4v13l-4-4H1zM12 4l6 6M18 4l-6 6" />
        </svg>
        <Fit c="ml-[11px] w-[17px] text-[17px] font-medium">英</Fit>
        <div className="ml-[11px] flex w-[83px] flex-col items-center gap-[3px] text-[14px]">
          <Fit c="w-[39px]">11:33</Fit>
          <Fit c="w-[83px]">2021/10/13</Fit>
        </div>
        <svg viewBox="0 0 30 30" className="mt-[8px] ml-[20px] h-[30px] w-[30px]">
          <path d="M0 1h20v16h-5l-4 4v-4H0z" fill="#000" />
          <path d="M4 5h12M4 9h12M4 13h8" stroke="#fff" strokeWidth="1.300" />
          <circle cx="20" cy="21" r="8" fill="#d9dce8" stroke="#999" />
        </svg>
        <div className="ml-[15px] h-[50px] w-px bg-[#b3b6c6]" />
      </div>
      <div className="absolute top-[21px] left-[1754px] text-[18px] text-white/70 [text-shadow:1px_1px_1px_#666,-1px_0_1px_#888]">
        <Fit c="w-[151px]">CSDN @星海映画</Fit>
      </div>
    </div>
  );
}

const comps: [string, string][] = [
  ["8050", "w-[32px]"],
  ["A", "w-[9px]"],
  ["AMS1117-3.3", "w-[86px]"],
  ["Bat", "w-[20px]"],
  ["BLM", "w-[28px]"],
  ["BQ2057CSN", "w-[77px]"],
  ["C 0.01uF", "w-[55px]"],
];

function Chevron({ c = "", flip = false }: { c?: string; flip?: boolean }) {
  return (
    <svg viewBox="0 0 10 6" className={`h-[6px] w-[10px] shrink-0 ${c}`} fill="none" stroke="currentColor">
      <path d={flip ? "M.5 5.500L5 1l4.500 4.500" : "M.5.5L5 5 9.500.5"} />
    </svg>
  );
}

function Section({ children, c = "bg-white border-[#999]" }: { children?: ReactNode; c?: string }) {
  return (
    <div className="mb-[7px] ml-[12px] flex gap-[2px]">
      <div className={`h-[73px] w-[367px] border ${c}`}>{children}</div>
      <Chevron flip c="mt-[2px] !h-[5px] !w-[9px] text-black [stroke-width:2]" />
    </div>
  );
}

const th = "border-r border-[#a0a0a0] shadow-[inset_1px_1px_0_#fff] pl-[3px] flex";

function Slope() {
  return (
    <svg viewBox="0 0 8 8" className="h-[8px] w-[8px]" fill="none">
      <path d="M1 7l3-6" stroke="#888" />
      <path d="M4 1l3 6H1" stroke="#fff" />
    </svg>
  );
}

function Library() {
  return (
    <div className="absolute top-[110px] left-[1523px] h-[789px] w-[394px] border border-[#555] bg-[#dedede] text-[13px] text-black shadow-[3px_4px_8px_rgba(0,0,0,0.4)]">
      <div className="h-[3px] bg-white" />
      <div className="flex h-[34px] items-center bg-gradient-to-b from-[#bbe3fd] to-[#a1cdec] text-[19px] font-semibold">
        <Fit c="ml-[6px] w-[35px]">库...</Fit>
        <div className="mr-[12px] ml-auto flex items-center gap-[15px]">
          <Tri />
          <svg viewBox="0 0 7 7" className="h-[7px] w-[7px]" stroke="#000" strokeWidth="1.700">
            <path d="M.5.5l6 6M6.500.5l-6 6" />
          </svg>
        </div>
      </div>
      <div className="mt-[13px] ml-[13px] flex">
        <div className={`${btn} h-[35px] w-[94px]`}>
          <Fit c="w-[60px]">Libraries...</Fit>
        </div>
        <div className={`${btn} ml-[11px] h-[35px] w-[95px]`}>
          <Fit c="w-[37px]">查找...</Fit>
        </div>
        <div className="ml-[10px] flex h-[35px] w-[147px] items-center justify-center border border-[#bfbfbf] bg-[#ccc] text-[#a0a0a0] [text-shadow:1px_1px_0_#fff]">
          <Fit c="w-[31px]">Place</Fit>
        </div>
      </div>
      <div className="mt-[11px] ml-[12px] flex h-[27px] w-[367px] items-center border border-r-0 border-[#7a7a7a] bg-white">
        <Icon n="schlib" c="ml-[4px] h-[16px] w-[16px]" />
        <Fit c="ml-[4px] w-[108px]">CoolBlocks.SchLib</Fit>
        <Chevron c="ml-auto text-[#444]" />
        <svg viewBox="0 0 10 5" className="mr-[6px] ml-[15px] h-[5px] w-[10px]">
          <path d="M0 0h3l2 1.500L7 0h3v2L5 5 0 2z" />
        </svg>
      </div>
      <div className="mt-[14px] ml-[12px] flex h-[27px] w-[367px] items-center border border-r-0 border-[#7a7a7a] bg-white">
        <Fit c="ml-[3px] w-[6px]">*</Fit>
        <Chevron c="mr-[7px] ml-auto text-[#444]" />
      </div>
      <div className="mt-[14px] ml-[12px] flex h-[172px] w-[367px] border border-r-0 border-[#8a8a8a] bg-white">
        <div className="flex w-[345px] flex-col overflow-hidden">
          <div className="flex h-[24px] shrink-0 items-center border-r border-b border-[#a0a0a0] bg-[#f0f0f0] pr-[6px] pl-[3px] text-[14px]">
            <Fit c="mr-auto w-[56px]">元件名称</Fit>
            <Slope />
          </div>
          <div className="ml-[10px] border-l border-dotted border-[#777]">
            {comps.map(([n, w], k) => (
              <div key={n} className="flex h-[22px] items-center">
                <div className="w-[13px] border-t border-dotted border-[#777]" />
                <Icon n="chip" c="h-[14px] w-[14px]" />
                <div className={`ml-[1px] flex h-[22px] flex-1 items-center pl-[2px] ${k === 0 ? "bg-[#f0f0f0]" : ""}`}>
                  <Fit c={w}>{n}</Fit>
                </div>
              </div>
            ))}
          </div>
        </div>
        <div className="ml-[1px] flex w-[19px] flex-col items-center bg-[#f0f0f0] text-[#555]">
          <Chevron flip c="mt-[8px] [stroke-width:2]" />
          <div className="mt-[7px] h-[21px] w-full bg-[#cdcdcd]" />
          <Chevron c="mt-auto mb-[8px] [stroke-width:2]" />
        </div>
      </div>
      <div className="mb-[12px] ml-[18px] flex h-[20px]">
        <Fit c="w-[96px]">67 components</Fit>
      </div>
      <Section c="bg-[#ffffe6] border-[#999]">
        <svg viewBox="0 0 365 71" className="h-[71px] w-[365px]" fill="none" stroke="#000">
          <path d="M166.500 15v18l9 5M175.500 38l-9 7v18M175.500 32v12M175.500 38.500h17" />
          <path d="M165 47l2-5 4 3z" fill="#00f" stroke="#00f" />
          <path d="M161 38.500h1" stroke="#00f" />
          <g stroke="none" fontSize="12" fontFamily="Liberation Serif, serif">
            <text x="184" y="36" fill="#333">1</text>
            <text x="195" y="38.500" fill="#26268c" textLength="22" lengthAdjust="spacingAndGlyphs">8050</text>
            <text x="195.500" y="29" fill="#26268c">*</text>
            <text transform="translate(164 23) rotate(-90)" fill="#222">3</text>
            <text transform="translate(164 60) rotate(-90)" fill="#222">2</text>
          </g>
        </svg>
      </Section>
      <Section>
        <div className="flex h-[24px] items-center border-b border-[#a0a0a0] bg-[#f0f0f0]">
          <div className={`${th} w-[49px]`}>
            <Fit c="w-[37px]">模型...</Fit>
          </div>
          <div className={`${th} w-[71px]`}>
            <Fit c="w-[65px]">Model Ty...</Fit>
          </div>
          {[1, 2, 3, 4, 5].map((k) => (
            <div key={k} className={`${th} w-[49px]`}>
              <Fit c="w-[37px]">模型...</Fit>
            </div>
          ))}
        </div>
      </Section>
      <Section>
        <div className="flex h-full items-center justify-center">
          <Fit c="w-[127px]">No Preview Available</Fit>
        </div>
      </Section>
      <Section>
        <div className="flex h-[43px] items-center border-b border-[#a0a0a0] bg-[#f0f0f0]">
          <div className={`${th} h-[39px] w-[107px] items-start`}>
            <Fit c="w-[42px]">供应商</Fit>
            <div className="mt-[17px] mr-[7px] ml-auto">
              <Slope />
            </div>
          </div>
          <div className={`${th} h-[39px] w-[107px]`}>
            <Fit c="w-[42px]">制造商</Fit>
          </div>
          <div className={`${th} h-[39px] w-[107px]`}>
            <Fit c="w-[28px]">描述</Fit>
          </div>
          <div className={`${th} h-[39px] w-[44px] justify-end pr-[3px]`}>
            <Fit c="w-[28px]">单价</Fit>
          </div>
        </div>
      </Section>
      <Section />
    </div>
  );
}

export default function App() {
  return (
    <div className="relative flex h-[1080px] w-[1920px] flex-col overflow-hidden bg-[#f0f0f0] [font-family:'Open_Sans','Noto_Sans_CJK_SC',sans-serif]">
      <TitleBar />
      <MenuRow />
      <ToolRow />
      <div className="flex h-[906px] bg-[#a8a8a8]">
        <Projects />
        <div className="flex w-[3px] shrink-0 items-center justify-center">
          <div className="h-[26px] w-px bg-[repeating-linear-gradient(#fff_0_1px,transparent_1px_2px)]" />
        </div>
        <div className="flex w-[1480px] shrink-0 flex-col">
          <Tabs />
          <div className="h-[3px] bg-[#dedede]" />
          <Board />
          <LayerBar />
        </div>
        <div className="mt-[3px] ml-[3px] flex h-[900px] w-[38px] justify-center bg-[#efefef] pt-[1px]">
          <div className="flex h-[60px] w-[30px] justify-center border border-[#d2d2d2] bg-[#f6f6f6] pt-[4px]">
            <Icon n="trash" c="h-[16px] w-[14px]" />
          </div>
        </div>
      </div>
      <StatusBar />
      <Taskbar />
      <Library />
    </div>
  );
}
